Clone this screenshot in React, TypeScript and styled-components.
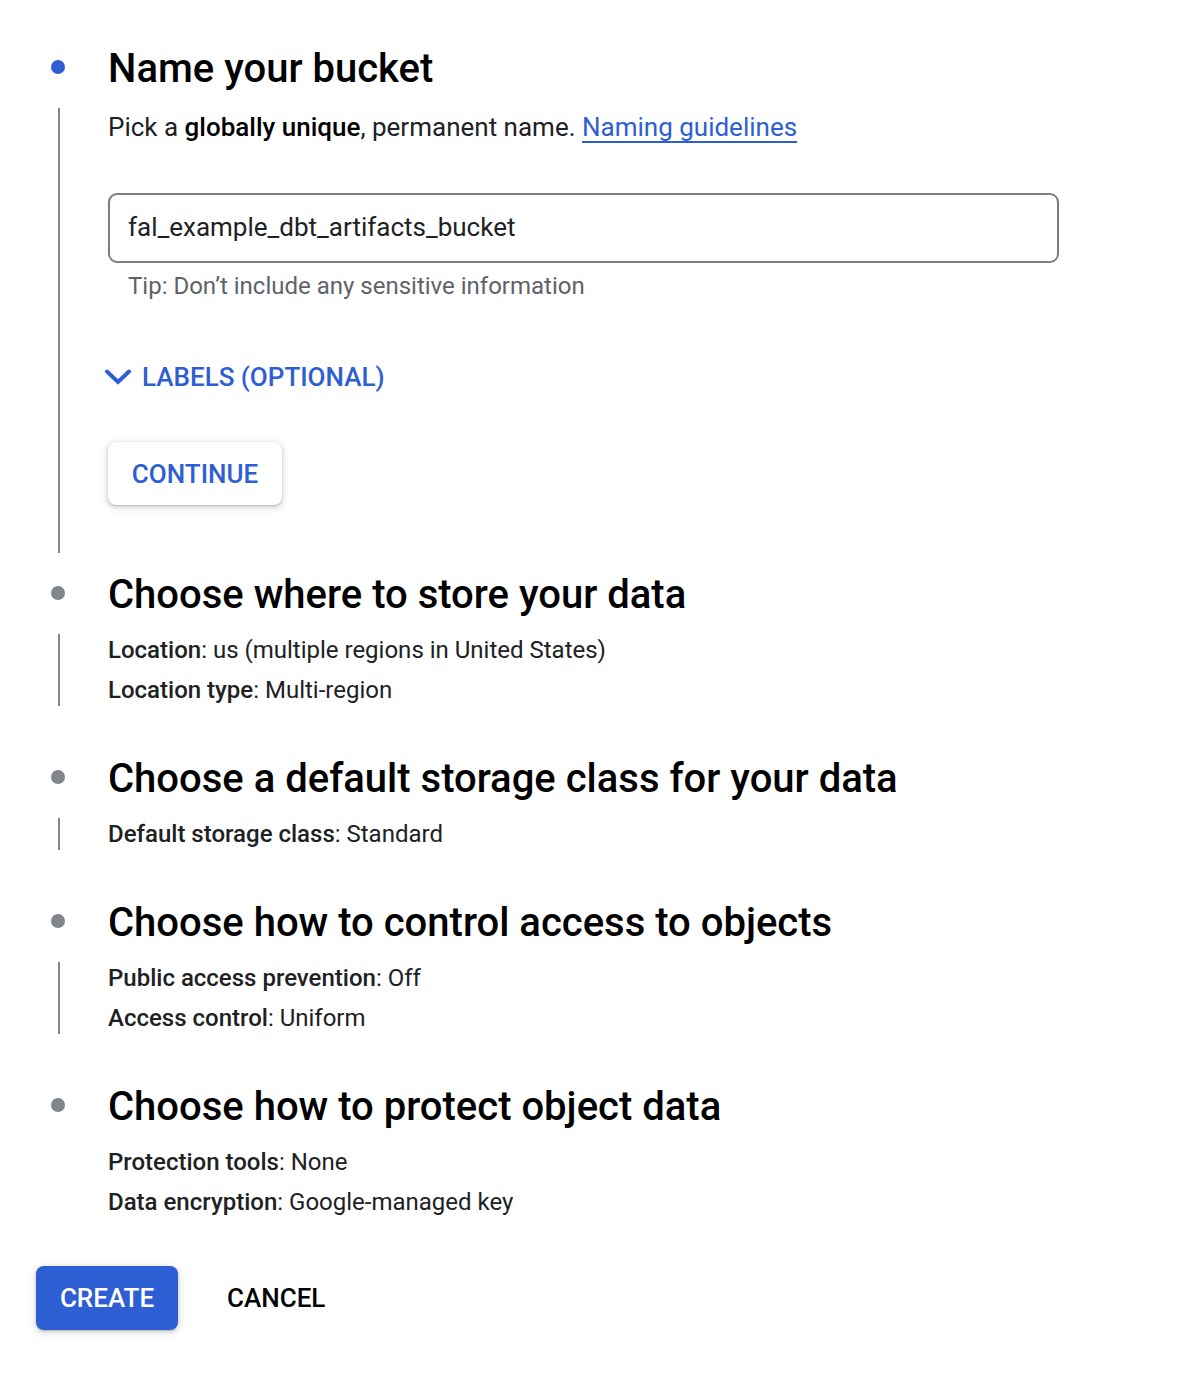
import React from "react";
import styled, { createGlobalStyle } from "styled-components";

const Global = createGlobalStyle`
  html, body { margin: 0; padding: 0; background: #ffffff; }
  body { font-family: Roboto, "Liberation Sans", Arial, sans-serif; color: #202124; }
`;

const BLUE = "#2e5ed3";

const Page = styled.div`
  padding: 44px 0 40px 0;
  width: 1190px;
  box-sizing: border-box;
`;

const Step = styled.section<{ $gap: number }>`
  display: grid;
  grid-template-columns: 108px 1fr;
  grid-template-rows: auto auto;
  margin-bottom: ${(p) => p.$gap}px;
`;

const DotCell = styled.div`
  display: flex;
  align-items: flex-start;
  padding-left: 51px;
  padding-top: 16px;
`;

const Dot = styled.span<{ $active?: boolean }>`
  width: 14px;
  height: 14px;
  border-radius: 50%;
  background: ${(p) => (p.$active ? BLUE : "#80868b")};
`;

const Heading = styled.h2`
  margin: 0 0 12px 0;
  padding-top: 1px;
  font-size: 40px;
  line-height: 47px;
  font-weight: 500;
  color: #000000;
  letter-spacing: 0;
`;

const Rail = styled.div`
  display: flex;
  justify-content: flex-start;
  padding-left: 58px;
  padding-top: 4px;
  padding-bottom: 4px;
`;

const RailLine = styled.div`
  width: 2px;
  background: #80868b;
`;

const Body = styled.div<{ $pad?: number }>`
  display: flex;
  flex-direction: column;
  align-items: flex-start;
  padding-bottom: ${(p) => p.$pad ?? 0}px;
`;

const Intro = styled.p`
  margin: 0;
  font-size: 26px;
  line-height: 46px;
  color: #202124;
`;

const Strong = styled.b`
  font-weight: 500;
  color: #000;
`;

const Link = styled.a`
  color: ${BLUE};
  text-decoration: underline;
  text-underline-offset: 5px;
  text-decoration-thickness: 2px;
`;

const InputBox = styled.div`
  margin-top: 43px;
  width: 951px;
  height: 70px;
  box-sizing: border-box;
  border: 2px solid #7a7e83;
  border-radius: 9px;
  display: flex;
  align-items: center;
  padding: 0 18px 2px 18px;
  font-size: 26px;
  color: #202124;
`;

const Tip = styled.div`
  margin-top: 7px;
  padding-left: 20px;
  font-size: 24px;
  line-height: 32px;
  color: #5f6368;
`;

const LabelsToggle = styled.button`
  margin-top: 55px;
  margin-left: -4px;
  height: 40px;
  display: flex;
  align-items: center;
  gap: 10px;
  background: none;
  border: none;
  padding: 0;
  font-family: inherit;
  font-size: 26px;
  font-weight: 500;
  color: ${BLUE};
  cursor: pointer;
`;

const ContinueButton = styled.button`
  margin-top: 45px;
  height: 63px;
  width: 174px;
  border: none;
  border-radius: 8px;
  background: #ffffff;
  box-shadow: 0 1px 2px rgba(60, 64, 67, 0.3), 0 2px 6px 2px rgba(60, 64, 67, 0.15);
  font-family: inherit;
  font-size: 26px;
  font-weight: 500;
  color: ${BLUE};
  cursor: pointer;
`;

const Detail = styled.div`
  font-size: 24px;
  line-height: 40px;
  color: #202124;
`;

const DetailKey = styled.span`
  font-weight: 500;
`;

const Footer = styled.div`
  display: flex;
  align-items: center;
  gap: 49px;
  padding-left: 36px;
`;

const PrimaryButton = styled.button`
  height: 64px;
  width: 142px;
  border: none;
  border-radius: 8px;
  background: ${BLUE};
  color: #ffffff;
  box-shadow: 0 1px 2px rgba(60, 64, 67, 0.3), 0 2px 6px 2px rgba(60, 64, 67, 0.15);
  font-family: inherit;
  font-size: 26px;
  font-weight: 500;
  cursor: pointer;
`;

const TextButton = styled.button`
  background: none;
  border: none;
  padding: 0;
  font-family: inherit;
  font-size: 26px;
  font-weight: 500;
  color: #000000;
  cursor: pointer;
`;

const Chevron = () => (
  <svg width="28" height="18" viewBox="0 0 28 18" fill="none">
    <path
      d="M3 3.5 L14 14 L25 3.5"
      stroke={BLUE}
      strokeWidth="4"
      strokeLinecap="round"
      strokeLinejoin="miter"
    />
  </svg>
);

type Item = { k: string; v: string };

const summaries: { title: string; items: Item[]; line: boolean }[] = [
  {
    title: "Choose where to store your data",
    items: [
      { k: "Location", v: "us (multiple regions in United States)" },
      { k: "Location type", v: "Multi-region" },
    ],
    line: true,
  },
  {
    title: "Choose a default storage class for your data",
    items: [{ k: "Default storage class", v: "Standard" }],
    line: true,
  },
  {
    title: "Choose how to control access to objects",
    items: [
      { k: "Public access prevention", v: "Off" },
      { k: "Access control", v: "Uniform" },
    ],
    line: true,
  },
  {
    title: "Choose how to protect object data",
    items: [
      { k: "Protection tools", v: "None" },
      { k: "Data encryption", v: "Google-managed key" },
    ],
    line: false,
  },
];

export default function App() {
  return (
    <>
      <Global />
      <Page>
        <Step $gap={13}>
          <DotCell>
            <Dot $active />
          </DotCell>
          <Heading>Name your bucket</Heading>
          <Rail>
            <RailLine />
          </Rail>
          <Body $pad={52}>
            <Intro>
              Pick a <Strong>globally unique</Strong>, permanent name.{" "}
              <Link href="#">Naming guidelines</Link>
            </Intro>
            <InputBox>fal_example_dbt_artifacts_bucket</InputBox>
            <Tip>Tip: Don’t include any sensitive information</Tip>
            <LabelsToggle>
              <Chevron />
              LABELS (OPTIONAL)
            </LabelsToggle>
            <ContinueButton>CONTINUE</ContinueButton>
          </Body>
        </Step>
        {summaries.map((s) => (
          <Step key={s.title} $gap={44}>
            <DotCell>
              <Dot />
            </DotCell>
            <Heading>{s.title}</Heading>
            <Rail>{s.line && <RailLine />}</Rail>
            <Body>
              {s.items.map((it) => (
                <Detail key={it.k}>
                  <DetailKey>{it.k}</DetailKey>: {it.v}
                </Detail>
              ))}
            </Body>
          </Step>
        ))}
        <Footer>
          <PrimaryButton>CREATE</PrimaryButton>
          <TextButton>CANCEL</TextButton>
        </Footer>
      </Page>
    </>
  );
}
